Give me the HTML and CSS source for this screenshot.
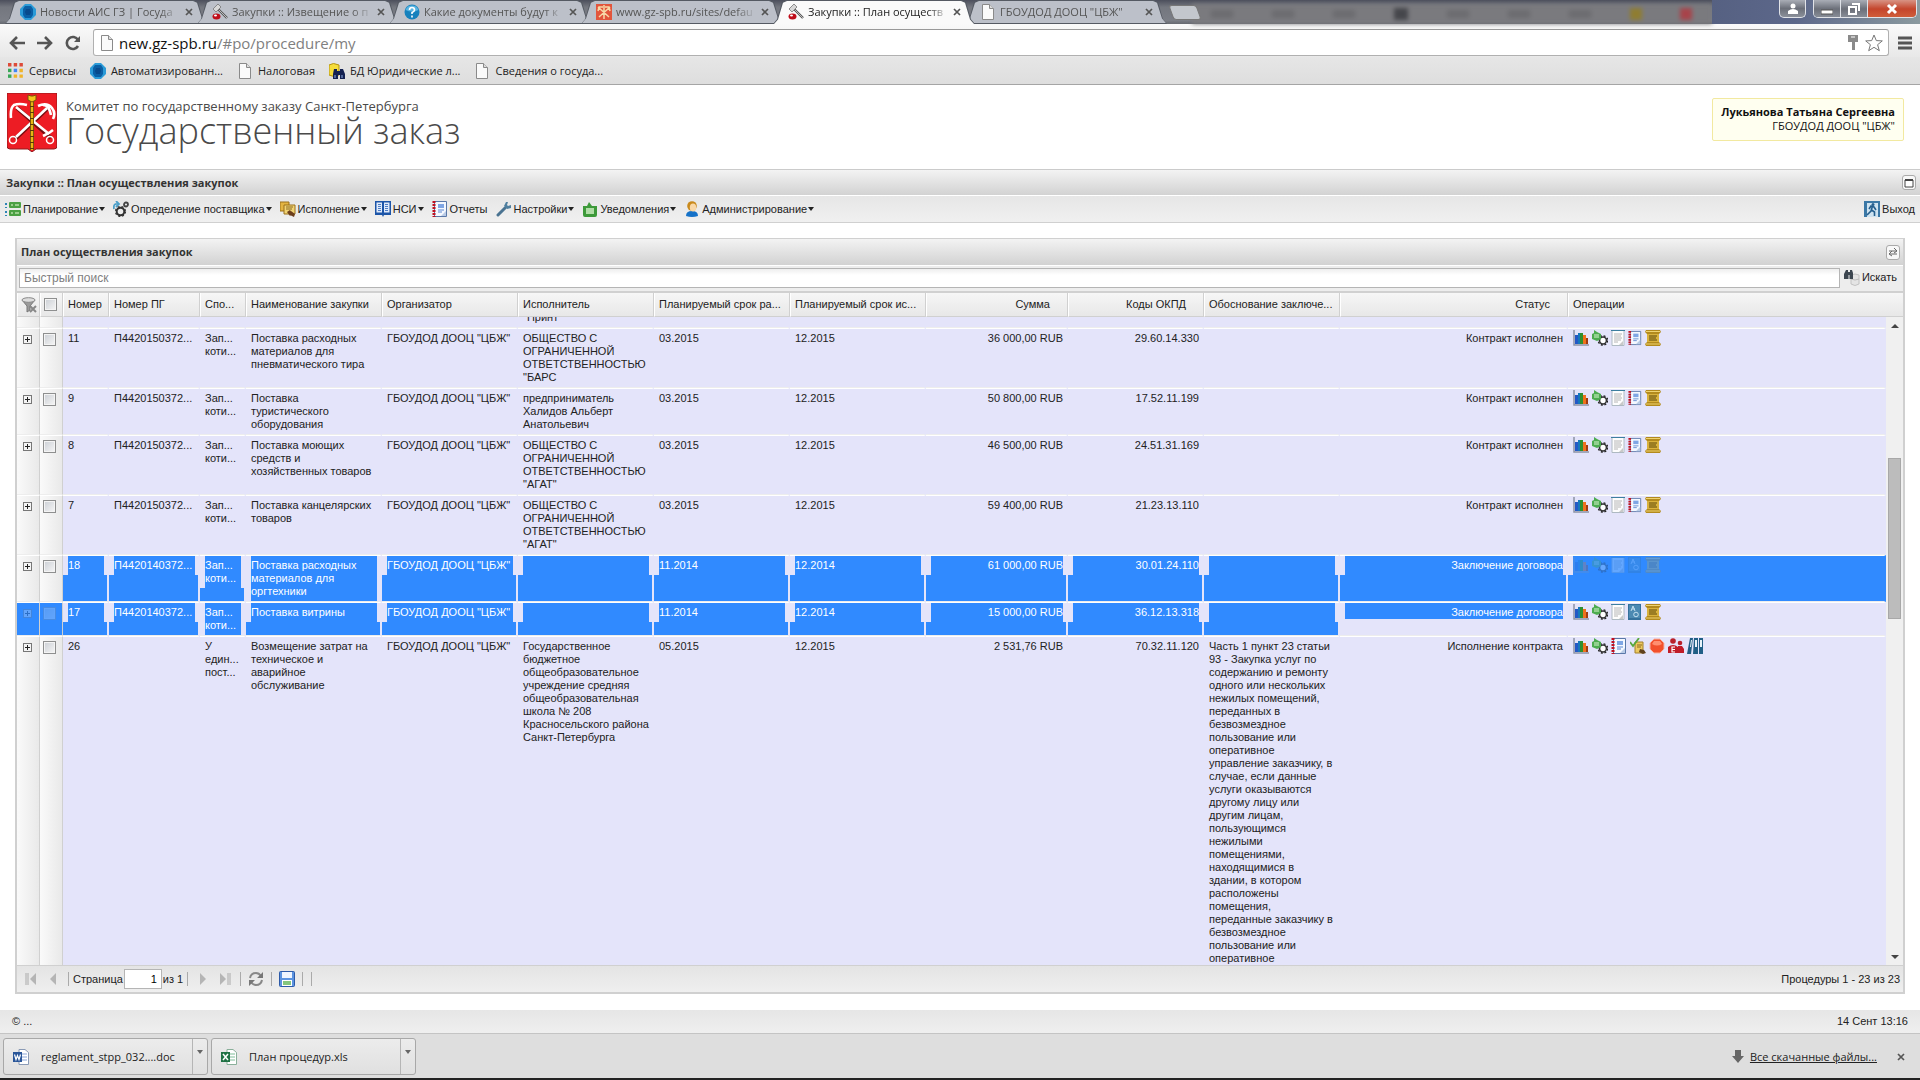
FILE: index.html
```html
<!DOCTYPE html>
<html lang="ru">
<head>
    <meta charset="UTF-8">
    <meta name="viewport" content="width=device-width, initial-scale=1.0">
    <title>Закупки :: План осуществления закупок</title>
    <link rel="stylesheet" href="styles.css">
</head>
<body>
    <!-- icon set -->
    <svg class="sprite" aria-hidden="true">
        <symbol id="i-blue" viewBox="0 0 16 16"><path d="M5 0h6l5 5v6l-5 5H5l-5-5V5z" fill="#2b9bd8"/><path d="M5 2h6l2 3v6l-2 3H5l-2-3V5z" fill="#0a5fa5"/><path d="M6 5h4l1 3-1 3H6L5 8z" fill="#084a8c"/></symbol>
        <symbol id="i-hammer" viewBox="0 0 16 16"><path d="M6 5l9 9" stroke="#555" stroke-width="2.4"/><path d="M6 5l9 9" stroke="#bbb" stroke-width="1"/><path d="M1 5l5-5 3 3-5 5z" fill="#d8d8d8" stroke="#777" stroke-width=".8"/><ellipse cx="4.500" cy="12.500" rx="4" ry="3" fill="#c00d1a"/><ellipse cx="3.500" cy="11.500" rx="1.500" ry="1" fill="#fff"/></symbol>
        <symbol id="i-question" viewBox="0 0 16 16"><circle cx="8" cy="8" r="7.500" fill="#1681bd"/><path d="M1.500 6a7 7 0 0 1 13 0q-6 3-13 0z" fill="#59b5e2"/><path d="M5.500 6q0-2.500 2.500-2.500T10.500 6Q10.500 7.500 8 8.500V10M8 11.500v2" fill="none" stroke="#fff" stroke-width="1.600"/></symbol>
        <symbol id="i-crest" viewBox="0 0 16 16"><rect width="16" height="16" fill="#e2553c"/><path d="M2 3l11 10M14 3L3 13M8 1v14M2 7l1-4 4 0M14 7l-1-4-4 0" stroke="#f7d9a8" stroke-width="1.500" fill="none"/></symbol>
        <symbol id="i-page" viewBox="0 0 16 16"><path d="M2.500.5h7l4 4v11h-11z" fill="#fafafa" stroke="#8a8a8a"/><path d="M9.500.5v4h4" fill="#ddd" stroke="#8a8a8a"/></symbol>
        <symbol id="i-db" viewBox="0 0 16 16"><path d="M0 2q4-3 10 0v10q-5 3-10 0z" fill="#f6dd3a" stroke="#b49313"/><path d="M5 6h3v2h3V6h3l2 5v5h-5v-4h-2v4H4v-5z" fill="#142152"/><path d="M6 12v3M13 12v3" stroke="#8fb2e8"/></symbol>
        <symbol id="i-plan" viewBox="0 0 16 16"><path d="M0 2h2v2H0zM0 6h2v1H0zM0 10h2v2H0zM0 14h2v1H0z" fill="#2c84b5"/><rect x="4" y="1" width="12" height="6" rx="1" fill="#4ba043"/><rect x="4" y="9" width="12" height="6" rx="1" fill="#4ba043"/><path d="M6 4h2m2 0h4M6 12h2m2 0h4" stroke="#b5dba6" stroke-width="1.600"/></symbol>
        <symbol id="i-gears" viewBox="0 0 16 16"><path d="M1 8Q0 2 5 3M3 0l3 3-3 3" fill="none" stroke="#4b9fc9" stroke-width="1.800"/><circle cx="7.500" cy="10.500" r="3.800" fill="none" stroke="#333" stroke-width="2" /><circle cx="7.500" cy="10.500" r="5" fill="none" stroke="#333" stroke-width="1.200" stroke-dasharray="2 2"/><circle cx="13" cy="3.500" r="2" fill="none" stroke="#444" stroke-width="1.800"/></symbol>
        <symbol id="i-exec" viewBox="0 0 16 16"><path d="M0 1h9v9H0z" fill="#e3b441" stroke="#9b701b"/><path d="M4 4h11v9H4z" fill="#f1d475" stroke="#9b701b"/><path d="M6 6h7M6 8h6" stroke="#8b6a22"/><path d="M7 11l3-2 2 3-2 3zM11 10l4 3-1 3-4-2z" fill="#6d3f1c"/></symbol>
        <symbol id="i-book" viewBox="0 0 16 16"><path d="M0 0h16v14H9l-1 2-1-2H0z" fill="#1c55a8"/><path d="M1.500 1.500h5.500v10H1.500zM9 1.500h5.500v10H9z" fill="#dfeafa"/><path d="M3 3.500h3M3 5.500h3M3 7.500h3M3 9.500h3M10 3.500h3M10 5.500h3M10 7.500h3M10 9.500h3" stroke="#4d7dc6"/></symbol>
        <symbol id="i-note" viewBox="0 0 16 16"><path d="M2.500.5h12v15h-12z" fill="#f4f8ff" stroke="#5a78a8"/><path d="M2 0v16" stroke="#c01020" stroke-width="3" stroke-dasharray="2 1"/><path d="M6 3h6v4H6z" fill="#7fa6e4"/><path d="M6 9h6M6 11h4" stroke="#5a86d0"/><path d="M9 15l5-5v5z" fill="#b9cbe6"/></symbol>
        <symbol id="i-wrench" viewBox="0 0 16 16"><path d="M2 14l7-7" stroke="#4a7391" stroke-width="3" stroke-linecap="round"/><path d="M10 1L8 5l3 3 4-1V4l-3 1-1-1 1-3z" fill="#4f7f9f"/></symbol>
        <symbol id="i-folder" viewBox="0 0 16 16"><path d="M1 5h4l2-4 3 4h5v9q0 2-2 2H3q-2 0-2-2z" fill="#3d9a3a"/><path d="M4 8h8M4 10h8M4 12h8" stroke="#d7f3cb" stroke-width="1.300"/></symbol>
        <symbol id="i-admin" viewBox="0 0 16 16"><path d="M2 15q0-5 6-5t6 5q-6 2-12 0z" fill="#1672c8"/><circle cx="8" cy="5" r="4.800" fill="#c98a1d"/><ellipse cx="9" cy="6.500" rx="3.200" ry="4" fill="#f9d8a8"/></symbol>
        <symbol id="i-exit" viewBox="0 0 16 16"><rect width="16" height="16" fill="#3b78a6"/><path d="M3 2h11v14H3z" fill="#cfe3f0"/><circle cx="9" cy="3.500" r="1.500" fill="#255f8e"/><path d="M8.500 5L7 10l-4 4M7.500 9l3 2v4M5 8l2-3 3 1 2 3" fill="none" stroke="#255f8e" stroke-width="1.600"/></symbol>
        <symbol id="i-find" viewBox="0 0 16 16"><path d="M7 5q4-2 8 0v9q-4 3-8 0z" fill="#e4e4e4" stroke="#c2c2c2"/><path d="M7 9q4 2 8 0" fill="none" stroke="#bbb"/><path d="M1 2l1-2h2v2h2V0h2l1 3v6H5.500V5h-1v4H0V4z" fill="#3c4650"/></symbol>
        <symbol id="i-chart" viewBox="0 0 16 16"><path d="M1 0v15h15" fill="none" stroke="#8c93a5" stroke-width="1.500"/><path d="M2 5h3v9H2z" fill="#2458c5"/><path d="M5 3h2v11H5z" fill="#1679b9"/><path d="M7 3h3v11H7z" fill="#2f8f2f"/><path d="M10 5h3v9h-3z" fill="#f0711c"/><path d="M13 8h2v6h-2z" fill="#9f3c12"/></symbol>
        <symbol id="i-process" viewBox="0 0 16 16"><circle cx="11" cy="10.500" r="3.400" fill="#fff" stroke="#333" stroke-width="1.500"/><circle cx="11" cy="10.500" r="4.700" fill="none" stroke="#222" stroke-width="1.300" stroke-dasharray="2 1.700"/><path d="M2 0l3 2 4 2v5l-4 2-5-2V4l2-1z" fill="#4cac50"/><path d="M2 5h5M2 7h5" stroke="#d8f5cf"/></symbol>
        <symbol id="i-doc" viewBox="0 0 14 16"><path d="M1 .5h12v15H1z" fill="#fdfdfd" stroke="#aebac2"/><path d="M0 .5h14" stroke="#3d7f9f"/><path d="M3 4h8M3 6h7M3 8h8M3 10h7M3 12h4" stroke="#b6b6b6"/><path d="M8 15l4-4v4z" fill="#c9c9c9"/></symbol>
        <symbol id="i-cert" viewBox="0 0 14 16"><path d="M0 0h13v16H0z" fill="#34719c"/><path d="M1 1h11v13H1z" fill="#4c8ab2"/><path d="M3 7l2-5 2 5M4 5h3" fill="none" stroke="#c6e0ef"/><circle cx="8" cy="10.500" r="2.300" fill="none" stroke="#c6e0ef"/></symbol>
        <symbol id="i-scroll" viewBox="0 0 16 16"><path d="M2 2h12v12H2z" fill="#d9b23d"/><path d="M1 0h14l1 2-2 2H2L0 2zM2 12h12l2 2-1 2H1l-1-2z" fill="#b38a1d"/><path d="M1 1.500h14M1 14h14" stroke="#efd370"/><path d="M4 6h8M4 8h7M4 10h8" stroke="#5f480b"/></symbol>
        <symbol id="i-check" viewBox="0 0 16 16"><path d="M5 4h8v11H5z" fill="#ecc95f" stroke="#a4802d"/><path d="M7 7h5M7 9h4" stroke="#8b6a22"/><path d="M0 4l3 4L9 0" fill="none" stroke="#58a83e" stroke-width="1.800"/><path d="M10 11l4 1 2 3-3 1-4-2z" fill="#60411c"/></symbol>
        <symbol id="i-stop" viewBox="0 0 16 16"><path d="M5 1h6l4 4v6l-4 4H5l-4-4V5z" fill="#f2502c" stroke="#f7b3a4"/><path d="M5 3h6l2 3q-5 3-10 0z" fill="#ff8f70"/></symbol>
        <symbol id="i-people" viewBox="0 0 16 16"><circle cx="5" cy="3" r="2.800" fill="#b9202a"/><circle cx="12" cy="5" r="2.300" fill="#b9202a"/><path d="M0 15V9q5-4 10 0v6zM10 15V8h4l2 3v4z" fill="#c01c28"/><path d="M7 9H4v5h3M4 11.500h3" fill="none" stroke="#fff" stroke-width="1.200"/></symbol>
        <symbol id="i-binders" viewBox="0 0 16 16"><path d="M3 0h3L4 16H0zM7 0h4v16H6zM12 0h4v16h-4z" fill="#215f86"/><path d="M4 2h1L4 9H3zM8 2h2v7H8zM13 2h2v7h-2z" fill="#e8f3f9"/></symbol>
        <symbol id="i-plus" viewBox="0 0 9 9"><rect x=".5" y=".5" width="8" height="8" fill="#f4f4f4" stroke="#777"/><path d="M2 4.500h5M4.500 2v5" stroke="#222"/></symbol>
        <symbol id="i-close" viewBox="0 0 8 8"><path d="M1 1l6 6M7 1L1 7" stroke="#555" stroke-width="1.700"/></symbol>
    </svg>

    <div class="tabstrip">
        <div class="ghost"><i></i><i></i><i></i><i class="dark"></i><i></i><i></i><i></i><i class="gold"></i><i class="red"></i></div>
        <div class="tabs">
            <div class="tab"><svg><use href="#i-blue"/></svg><span>Новости АИС ГЗ | Госуда</span><button aria-label="Закрыть"><svg><use href="#i-close"/></svg></button></div>
            <div class="tab"><svg><use href="#i-hammer"/></svg><span>Закупки :: Извещение о п</span><button aria-label="Закрыть"><svg><use href="#i-close"/></svg></button></div>
            <div class="tab"><svg><use href="#i-question"/></svg><span>Какие документы будут к</span><button aria-label="Закрыть"><svg><use href="#i-close"/></svg></button></div>
            <div class="tab"><svg><use href="#i-crest"/></svg><span>www.gz-spb.ru/sites/defau</span><button aria-label="Закрыть"><svg><use href="#i-close"/></svg></button></div>
            <div class="tab active"><svg><use href="#i-hammer"/></svg><span>Закупки :: План осуществ</span><button aria-label="Закрыть"><svg><use href="#i-close"/></svg></button></div>
            <div class="tab"><svg><use href="#i-page"/></svg><span>ГБОУДОД ДООЦ "ЦБЖ"</span><button aria-label="Закрыть"><svg><use href="#i-close"/></svg></button></div>
            <button class="new-tab" aria-label="Новая вкладка"></button>
        </div>
        <div class="window-buttons">
            <button class="profile" aria-label="Профиль"><svg viewBox="0 0 12 12"><circle cx="6" cy="3" r="2.500" fill="#fff"/><path d="M1 11V8q5-4 10 0v3z" fill="#fff"/></svg></button>
            <div class="group">
                <button aria-label="Свернуть"><svg viewBox="0 0 12 12"><path d="M0 7h12v4H0z" fill="#fff" stroke="#555"/></svg></button>
                <button aria-label="Восстановить"><svg viewBox="0 0 12 12"><path d="M4 1h7v7M1 4h7v7H1z" fill="none" stroke="#fff" stroke-width="2"/></svg></button>
                <button class="close" aria-label="Закрыть окно"><svg viewBox="0 0 12 12"><path d="M2 2l8 8M10 2l-8 8" stroke="#fff" stroke-width="3"/></svg></button>
            </div>
        </div>
    </div>

    <div class="navbar">
        <button aria-label="Назад"><svg viewBox="0 0 16 16"><path d="M16 8H3M8 2L2 8l6 6" fill="none" stroke="#555" stroke-width="2.600"/></svg></button>
        <button aria-label="Вперёд"><svg viewBox="0 0 16 16"><path d="M0 8h13M8 2l6 6-6 6" fill="none" stroke="#555" stroke-width="2.600"/></svg></button>
        <button aria-label="Обновить"><svg viewBox="0 0 16 16"><path d="M13 11a6 6 0 1 1 0-6" fill="none" stroke="#555" stroke-width="2.600"/><path d="M15 1v6H9z" fill="#555"/></svg></button>
        <div class="omnibox">
            <svg><use href="#i-page"/></svg>
            <div class="url">new.gz-spb.ru<span>/#po/procedure/my</span></div>
            <svg class="key" viewBox="0 0 16 16"><path d="M3 0h10v7h-3v8H7V7H3z" fill="#8a8a8a"/><path d="M6 2h4" stroke="#fff"/></svg>
            <svg class="star" viewBox="0 0 18 18"><path d="M9 1l2.300 5.600 6 .3-4.700 3.800 1.700 6L9 13.300 3.700 16.700l1.700-6L.7 6.900l6-.3z" fill="#fff" stroke="#777"/></svg>
        </div>
        <button class="menu" aria-label="Меню"><svg viewBox="0 0 14 14"><path d="M0 2h14M0 7h14M0 12h14" stroke="#555" stroke-width="3"/></svg></button>
    </div>

    <nav class="bookmarks">
        <a href="#"><svg viewBox="0 0 14 14"><path d="M0 0h3v3H0zM5 0h3v3H5zM10 0h3v3h-3z" fill="#dd4b39"/><path d="M0 5h3v3H0z" fill="#3aa757"/><path d="M5 5h3v3H5z" fill="#4285f4"/><path d="M10 5h3v3h-3zM5 10h3v3H5zM10 10h3v3h-3z" fill="#f0b429"/><path d="M0 10h3v3H0z" fill="#3aa757"/></svg>Сервисы</a>
        <a href="#"><svg><use href="#i-blue"/></svg>Автоматизированн...</a>
        <a href="#"><svg><use href="#i-page"/></svg>Налоговая</a>
        <a href="#"><svg><use href="#i-db"/></svg>БД Юридические л...</a>
        <a href="#"><svg><use href="#i-page"/></svg>Сведения о госуда...</a>
    </nav>

    <header class="site-header">
        <div class="brand">
            <svg class="coat" viewBox="0 0 50 59">
                <path d="M0 0h50v53q0 3-3 3H29l-4 3-4-3H3q-3 0-3-3z" fill="#ed1c24" stroke="#8f1a1c"/>
                <g fill="none" stroke="#7a0d10" stroke-width="4"><path d="M10 15l34 30M41 15L8 46"/></g>
                <g fill="none" stroke="#fff" stroke-width="2.600"><path d="M9 14l33 27M40 15L9 44"/><path d="M4 25q-1-10 3-13 5-2 13 0M46 26q3-6-1-11-5-6-14-2M36 12q6 0 8 10"/><circle cx="6" cy="47" r="3.500" stroke-width="1.500"/><circle cx="43" cy="47" r="3.500" stroke-width="1.500"/><path d="M36 43l6-3 4-3"/></g>
                <path d="M25 8v49" stroke="#5b3a08" stroke-width="4"/><path d="M25 8v49" stroke="#e8b713" stroke-width="2.500" stroke-dasharray="5 1"/>
                <path d="M21 2l3 1h2l3-1v5l-4 2-4-2z" fill="#f4c61b" stroke="#7b520c"/>
            </svg>
            <div>
                <div class="committee">Комитет по государственному заказу Санкт-Петербурга</div>
                <div class="product">Государственный заказ</div>
            </div>
        </div>
        <div class="user">
            <b>Лукьянова Татьяна Сергеевна</b>
            <div>ГБОУДОД ДООЦ "ЦБЖ"</div>
        </div>
    </header>

    <div class="titlebar">
        <h1>Закупки :: План осуществления закупок</h1>
        <button class="tool" aria-label="Развернуть"><svg viewBox="0 0 12 12"><path d="M2 3h8v7H2z" fill="#fff" stroke="#444"/><path d="M2 3h8" stroke="#444" stroke-width="2"/></svg></button>
    </div>

    <nav class="toolbar">
        <button><svg><use href="#i-plan"/></svg>Планирование<i class="arrow"></i></button>
        <button><svg><use href="#i-gears"/></svg>Определение поставщика<i class="arrow"></i></button>
        <button><svg><use href="#i-exec"/></svg>Исполнение<i class="arrow"></i></button>
        <button><svg><use href="#i-book"/></svg>НСИ<i class="arrow"></i></button>
        <button><svg><use href="#i-note"/></svg>Отчеты</button>
        <button><svg><use href="#i-wrench"/></svg>Настройки<i class="arrow"></i></button>
        <button><svg><use href="#i-folder"/></svg>Уведомления<i class="arrow"></i></button>
        <button><svg><use href="#i-admin"/></svg>Администрирование<i class="arrow"></i></button>
        <button class="exit"><svg><use href="#i-exit"/></svg>Выход</button>
    </nav>

    <main class="panel">
        <div class="panel-header">
            <h2>План осуществления закупок</h2>
            <button class="tool" aria-label="Обновить таблицу"><svg viewBox="0 0 12 12"><path d="M2 5h7M7 2l3 3-3 2M10 8H3M5 5L2 8l3 2" fill="none" stroke="#666"/></svg></button>
        </div>
        <div class="search">
            <input type="text" placeholder="Быстрый поиск" aria-label="Быстрый поиск">
            <button><svg><use href="#i-find"/></svg>Искать</button>
        </div>

        <table class="grid grid-head">
            <colgroup><col class="w-side"><col class="w-side"><col class="w-num"><col class="w-pg"><col class="w-num"><col class="w-m"><col class="w-m"><col class="w-m"><col class="w-m"><col class="w-m"><col class="w-sum"><col class="w-m"><col class="w-m"><col class="w-status"><col></colgroup>
            <thead>
                <tr>
                    <th class="mid"><svg viewBox="0 0 16 16"><path d="M1 3l5 6v6l3-2V9l5-6z" fill="#9a9a9a" stroke="#777"/><ellipse cx="7.500" cy="3" rx="6.500" ry="2.300" fill="#ddd" stroke="#888"/><path d="M9 9l6 6M15 9l-6 6" stroke="#888" stroke-width="2"/></svg></th>
                    <th class="mid"><input type="checkbox" aria-label="Выбрать все"></th>
                    <th>Номер</th>
                    <th>Номер ПГ</th>
                    <th>Спо...</th>
                    <th>Наименование закупки</th>
                    <th>Организатор</th>
                    <th>Исполнитель</th>
                    <th>Планируемый срок ра...</th>
                    <th>Планируемый срок ис...</th>
                    <th class="r">Сумма</th>
                    <th class="r">Коды ОКПД</th>
                    <th>Обоснование заключе...</th>
                    <th class="r">Статус</th>
                    <th>Операции</th>
                </tr>
            </thead>
        </table>

        <div class="grid-body">
            <div class="rows">
                <table class="grid">
                    <colgroup><col class="w-side"><col class="w-side"><col class="w-num"><col class="w-pg"><col class="w-num"><col class="w-m"><col class="w-m"><col class="w-m"><col class="w-m"><col class="w-m"><col class="w-sum"><col class="w-m"><col class="w-m"><col class="w-status"><col></colgroup>
                    <tbody>
                        <tr>
                            <td class="side"></td><td class="side"></td><td></td><td></td><td></td><td></td><td></td>
                            <td><div>"Принт</div></td>
                            <td></td><td></td><td></td><td></td><td></td><td></td><td></td>
                        </tr>
                        <tr>
                            <td class="side"><svg><use href="#i-plus"/></svg></td>
                            <td class="side"><input type="checkbox" aria-label="Выбрать 11"></td>
                            <td><div>11</div></td>
                            <td><div>П4420150372...</div></td>
                            <td><div>Зап...<br>коти...</div></td>
                            <td><div>Поставка расходных материалов для пневматического тира</div></td>
                            <td><div>ГБОУДОД ДООЦ "ЦБЖ"</div></td>
                            <td><div>ОБЩЕСТВО С ОГРАНИЧЕННОЙ ОТВЕТСТВЕННОСТЬЮ "БАРС</div></td>
                            <td><div>03.2015</div></td>
                            <td><div>12.2015</div></td>
                            <td class="r"><div>36 000,00 RUB</div></td>
                            <td class="r"><div>29.60.14.330</div></td>
                            <td></td>
                            <td class="r"><div>Контракт исполнен</div></td>
                            <td><div class="ops"><svg><use href="#i-chart"/></svg><svg><use href="#i-process"/></svg><svg class="thin"><use href="#i-doc"/></svg><svg class="thin"><use href="#i-note"/></svg><svg><use href="#i-scroll"/></svg></div></td>
                        </tr>
                        <tr>
                            <td class="side"><svg><use href="#i-plus"/></svg></td>
                            <td class="side"><input type="checkbox" aria-label="Выбрать 9"></td>
                            <td><div>9</div></td>
                            <td><div>П4420150372...</div></td>
                            <td><div>Зап...<br>коти...</div></td>
                            <td><div>Поставка<br>туристического оборудования</div></td>
                            <td><div>ГБОУДОД ДООЦ "ЦБЖ"</div></td>
                            <td><div>предприниматель Халидов Альберт Анатольевич</div></td>
                            <td><div>03.2015</div></td>
                            <td><div>12.2015</div></td>
                            <td class="r"><div>50 800,00 RUB</div></td>
                            <td class="r"><div>17.52.11.199</div></td>
                            <td></td>
                            <td class="r"><div>Контракт исполнен</div></td>
                            <td><div class="ops"><svg><use href="#i-chart"/></svg><svg><use href="#i-process"/></svg><svg class="thin"><use href="#i-doc"/></svg><svg class="thin"><use href="#i-note"/></svg><svg><use href="#i-scroll"/></svg></div></td>
                        </tr>
                        <tr>
                            <td class="side"><svg><use href="#i-plus"/></svg></td>
                            <td class="side"><input type="checkbox" aria-label="Выбрать 8"></td>
                            <td><div>8</div></td>
                            <td><div>П4420150372...</div></td>
                            <td><div>Зап...<br>коти...</div></td>
                            <td><div>Поставка моющих средств и хозяйственных товаров</div></td>
                            <td><div>ГБОУДОД ДООЦ "ЦБЖ"</div></td>
                            <td><div>ОБЩЕСТВО С ОГРАНИЧЕННОЙ ОТВЕТСТВЕННОСТЬЮ "АГАТ"</div></td>
                            <td><div>03.2015</div></td>
                            <td><div>12.2015</div></td>
                            <td class="r"><div>46 500,00 RUB</div></td>
                            <td class="r"><div>24.51.31.169</div></td>
                            <td></td>
                            <td class="r"><div>Контракт исполнен</div></td>
                            <td><div class="ops"><svg><use href="#i-chart"/></svg><svg><use href="#i-process"/></svg><svg class="thin"><use href="#i-doc"/></svg><svg class="thin"><use href="#i-note"/></svg><svg><use href="#i-scroll"/></svg></div></td>
                        </tr>
                        <tr>
                            <td class="side"><svg><use href="#i-plus"/></svg></td>
                            <td class="side"><input type="checkbox" aria-label="Выбрать 7"></td>
                            <td><div>7</div></td>
                            <td><div>П4420150372...</div></td>
                            <td><div>Зап...<br>коти...</div></td>
                            <td><div>Поставка канцелярских товаров</div></td>
                            <td><div>ГБОУДОД ДООЦ "ЦБЖ"</div></td>
                            <td><div>ОБЩЕСТВО С ОГРАНИЧЕННОЙ ОТВЕТСТВЕННОСТЬЮ "АГАТ"</div></td>
                            <td><div>03.2015</div></td>
                            <td><div>12.2015</div></td>
                            <td class="r"><div>59 400,00 RUB</div></td>
                            <td class="r"><div>21.23.13.110</div></td>
                            <td></td>
                            <td class="r"><div>Контракт исполнен</div></td>
                            <td><div class="ops"><svg><use href="#i-chart"/></svg><svg><use href="#i-process"/></svg><svg class="thin"><use href="#i-doc"/></svg><svg class="thin"><use href="#i-note"/></svg><svg><use href="#i-scroll"/></svg></div></td>
                        </tr>
                        <tr class="marked">
                            <td class="side"><svg><use href="#i-plus"/></svg></td>
                            <td class="side"><input type="checkbox" aria-label="Выбрать 18"></td>
                            <td><div>18</div></td>
                            <td><div>П4420140372...</div></td>
                            <td><div>Зап...<br>коти...</div></td>
                            <td><div>Поставка расходных материалов для оргтехники</div></td>
                            <td><div>ГБОУДОД ДООЦ "ЦБЖ"</div></td>
                            <td><div>&nbsp;</div></td>
                            <td><div>11.2014</div></td>
                            <td><div>12.2014</div></td>
                            <td class="r"><div>61 000,00 RUB</div></td>
                            <td class="r"><div>30.01.24.110</div></td>
                            <td><div>&nbsp;</div></td>
                            <td class="r"><div>Заключение договора</div></td>
                            <td class="last"><div class="ops"><svg><use href="#i-chart"/></svg><svg><use href="#i-process"/></svg><svg class="thin"><use href="#i-doc"/></svg><svg class="thin"><use href="#i-cert"/></svg><svg><use href="#i-scroll"/></svg></div></td>
                        </tr>
                        <tr class="marked">
                            <td class="side on"><svg><use href="#i-plus"/></svg></td>
                            <td class="side on"><input type="checkbox" aria-label="Выбрать 17"></td>
                            <td><div>17</div></td>
                            <td><div>П4420140372...</div></td>
                            <td><div>Зап...<br>коти...</div></td>
                            <td><div>Поставка витрины</div></td>
                            <td><div>ГБОУДОД ДООЦ "ЦБЖ"</div></td>
                            <td><div>&nbsp;</div></td>
                            <td><div>11.2014</div></td>
                            <td><div>12.2014</div></td>
                            <td class="r"><div>15 000,00 RUB</div></td>
                            <td class="r"><div>36.12.13.318</div></td>
                            <td><div>&nbsp;</div></td>
                            <td class="r tail"><div>Заключение договора</div></td>
                            <td class="plain"><div class="ops"><svg><use href="#i-chart"/></svg><svg><use href="#i-process"/></svg><svg class="thin"><use href="#i-doc"/></svg><svg class="thin"><use href="#i-cert"/></svg><svg><use href="#i-scroll"/></svg></div></td>
                        </tr>
                        <tr>
                            <td class="side"><svg><use href="#i-plus"/></svg></td>
                            <td class="side"><input type="checkbox" aria-label="Выбрать 26"></td>
                            <td><div>26</div></td>
                            <td></td>
                            <td><div>У<br>един...<br>пост...</div></td>
                            <td><div>Возмещение затрат на техническое и<br>аварийное<br>обслуживание</div></td>
                            <td><div>ГБОУДОД ДООЦ "ЦБЖ"</div></td>
                            <td><div>Государственное бюджетное общеобразовательное учреждение средняя общеобразовательная школа № 208<br>Красносельского района Санкт-Петербурга</div></td>
                            <td><div>05.2015</div></td>
                            <td><div>12.2015</div></td>
                            <td class="r"><div>2 531,76 RUB</div></td>
                            <td class="r"><div>70.32.11.120</div></td>
                            <td><div>Часть 1 пункт 23 статьи 93 - Закупка услуг по содержанию и ремонту одного или нескольких нежилых помещений, переданных в безвозмездное пользование или оперативное управление заказчику, в случае, если данные услуги оказываются другому лицу или другим лицам, пользующимся нежилыми помещениями, находящимися в здании, в котором расположены помещения, переданные заказчику в безвозмездное пользование или оперативное</div></td>
                            <td class="r"><div>Исполнение контракта</div></td>
                            <td><div class="ops"><svg><use href="#i-chart"/></svg><svg><use href="#i-process"/></svg><svg><use href="#i-note"/></svg><svg><use href="#i-check"/></svg><svg><use href="#i-stop"/></svg><svg><use href="#i-people"/></svg><svg><use href="#i-binders"/></svg></div></td>
                        </tr>
                    </tbody>
                </table>
            </div>
            <div class="scrollbar">
                <i class="up"></i>
                <div class="track"><div class="thumb"></div></div>
                <i class="down"></i>
            </div>
        </div>

        <div class="paging">
            <button aria-label="Первая"><svg viewBox="0 0 16 16"><path d="M3 2v12M5 2v12" stroke="#aaa"/><path d="M13 2v12L7 8z" fill="#b5b5b5"/></svg></button>
            <button aria-label="Предыдущая"><svg viewBox="0 0 16 16"><path d="M11 2v12L5 8z" fill="#b5b5b5"/></svg></button>
            <i class="sep"></i>
            <label for="page">Страница</label>
            <input type="text" id="page" value="1">
            <span>из 1</span>
            <i class="sep"></i>
            <button aria-label="Следующая"><svg viewBox="0 0 16 16"><path d="M5 2v12l6-6z" fill="#b5b5b5"/></svg></button>
            <button aria-label="Последняя"><svg viewBox="0 0 16 16"><path d="M11 2v12M13 2v12" stroke="#aaa"/><path d="M3 2v12l6-6z" fill="#b5b5b5"/></svg></button>
            <i class="sep"></i>
            <button aria-label="Обновить"><svg viewBox="0 0 16 16"><path d="M2 7q1-5 6-5 3 0 5 3M14 9q-1 5-6 5-3 0-5-3" fill="none" stroke="#888" stroke-width="2"/><path d="M15 1v6H9zM1 15V9h6z" fill="#777"/></svg></button>
            <i class="sep"></i>
            <button aria-label="Сохранить"><svg viewBox="0 0 16 16"><rect x=".5" y=".5" width="15" height="15" rx="1" fill="#5b93e0" stroke="#2c5aa8"/><path d="M3 1h10v6H3z" fill="#eef5ff"/><path d="M3 9h10v6H3z" fill="#fff"/><path d="M4 11h8M4 13h8" stroke="#5cb454" stroke-width="1.300"/></svg></button>
            <i class="sep"></i>
            <i class="sep"></i>
            <span class="total">Процедуры 1 - 23 из 23</span>
        </div>
    </main>

    <footer class="status">
        <span>© ...</span>
        <span>14 Сент 13:16</span>
    </footer>

    <div class="downloads">
        <div class="file">
            <button class="name"><svg viewBox="0 0 16 16"><path d="M6 .5h6l3.500 3v12H6z" fill="#fff" stroke="#8a9ab5"/><path d="M9 5h5M9 8h5M9 11h5" stroke="#8aa5d8"/><path d="M0 3h9v10H0z" fill="#2a5699"/><path d="M1.500 5.500l1.500 5 1.500-4 1.500 4 1.500-5" fill="none" stroke="#fff" stroke-width="1.200"/></svg>reglament_stpp_032....doc</button>
            <button class="more" aria-label="Действия"><i class="arrow"></i></button>
        </div>
        <div class="file">
            <button class="name"><svg viewBox="0 0 16 16"><path d="M6 .5h6l3.500 3v12H6z" fill="#fff" stroke="#8ab09a"/><path d="M9 5h5M9 8h5M9 11h5" stroke="#7fbd98"/><path d="M0 3h9v10H0z" fill="#207245"/><path d="M2 5l5 6M7 5l-5 6" stroke="#fff" stroke-width="1.500"/></svg>План процедур.xls</button>
            <button class="more" aria-label="Действия"><i class="arrow"></i></button>
        </div>
        <div class="all">
            <svg viewBox="0 0 12 14"><path d="M3 0h6v6h3l-6 7-6-7h3z" fill="#666"/></svg>
            <a href="#">Все скачанные файлы...</a>
            <button aria-label="Закрыть панель"><svg><use href="#i-close"/></svg></button>
        </div>
    </div>
</body>
</html>
```
FILE: styles.css
```css
* {
    margin: 0;
    padding: 0;
    box-sizing: border-box;
}
body {
    font-family: "Liberation Sans", Arial, sans-serif;
    font-size: 11px;
    line-height: 13px;
    color: #222;
    background: #fff;
    display: flex;
    flex-direction: column;
    height: 100vh;
    overflow: hidden;
}
button {
    font: inherit;
    color: inherit;
    background: none;
    border: none;
    display: flex;
    align-items: center;
}
svg {
    width: 16px;
    height: 16px;
    flex: none;
    display: block;
}
.sprite {
    position: absolute;
    width: 0;
    height: 0;
}

/* browser tabs */
.tabstrip {
    position: relative;
    display: flex;
    justify-content: space-between;
    height: 24px;
    padding-left: 5px;
    background: linear-gradient(#4c4f5c, #74777f 30%, #7b7e86 85%, #666970);
    font: 11px/24px "Open Sans", sans-serif;
    flex: none;
}
.tabstrip::after {
    content: "";
    position: absolute;
    top: 0;
    right: 0;
    width: 208px;
    height: 24px;
    background: linear-gradient(to right, #566182, #5c678a 40%, #8b9a9f);
}
.ghost {
    position: absolute;
    right: 208px;
    bottom: 0;
    width: 520px;
    height: 20px;
    display: flex;
    align-items: center;
    justify-content: space-around;
    background: #7a7a7e;
    filter: blur(2px);
}
.ghost i {
    width: 22px;
    height: 8px;
    background: #6c6c70;
}
.ghost .dark {
    width: 14px;
    height: 12px;
    background: #45464b;
}
.ghost .gold {
    width: 12px;
    height: 12px;
    background: #8f7d31;
}
.ghost .red {
    width: 12px;
    height: 12px;
    background: #a8434a;
}
.tabs {
    display: flex;
    position: relative;
    z-index: 1;
}
.tab {
    display: flex;
    align-items: center;
    width: 202px;
    margin-right: -10px;
    padding: 0 14px 0 15px;
    color: #555;
    background: #555a63;
    clip-path: polygon(0 100%, 4px 80%, 9px 8%, 13px 0, 189px 0, 193px 8%, 198px 80%, 100% 100%);
    position: relative;
}
.tab::before {
    content: "";
    position: absolute;
    inset: 1px 0 1px 0;
    background: #bcc0c9;
    clip-path: polygon(1px 100%, 5px 80%, 10px 8%, 14px 0, 188px 0, 192px 8%, 197px 80%, 201px 100%);
    z-index: -1;
}
.tab.active {
    z-index: 2;
    color: #222;
}
.tab.active::before {
    background: #fafafa;
    bottom: 0;
}
.tab span {
    flex: 1;
    margin: 0 4px;
    overflow: hidden;
    white-space: nowrap;
    -webkit-mask-image: linear-gradient(to right, #000 85%, transparent);
    mask-image: linear-gradient(to right, #000 85%, transparent);
}
.tab button svg,
.all button svg {
    width: 8px;
    height: 8px;
}
.new-tab {
    width: 28px;
    height: 15px;
    margin: 5px 0 0 14px;
    background: #c3c7cd;
    border: 1px solid #777;
    border-radius: 3px;
    transform: skewX(20deg);
}
.window-buttons {
    display: flex;
    gap: 7px;
    padding-right: 3px;
    position: relative;
    z-index: 1;
}
.window-buttons button {
    justify-content: center;
    width: 27px;
    height: 18px;
    background: linear-gradient(#a9adb6, #6b6f79 50%, #8b909a);
    border-right: 1px solid #dfe2e8;
}
.window-buttons svg {
    width: 12px;
    height: 12px;
}
.window-buttons .profile,
.group {
    height: 18px;
    border: 1px solid #e1e3e8;
    border-top: none;
    border-radius: 0 0 5px 5px;
    overflow: hidden;
}
.group {
    display: flex;
}
.window-buttons .close {
    width: 48px;
    background: linear-gradient(#d89384, #c4452c 50%, #d2603b);
    border: none;
}

/* address row and bookmarks */
.navbar {
    display: flex;
    align-items: center;
    height: 33px;
    padding: 4px 8px 0 9px;
    background: linear-gradient(#fafafa, #e8e8e8);
    flex: none;
}
.navbar button {
    margin-right: 12px;
}
.omnibox {
    flex: 1;
    display: flex;
    align-items: center;
    height: 27px;
    padding: 0 5px;
    background: #fff;
    border: 1px solid #b0b0b0;
    border-top-color: #999;
    border-radius: 3px;
}
.url {
    flex: 1;
    margin-left: 4px;
    font: 15px/20px "Open Sans", sans-serif;
    color: #111;
}
.url span {
    color: #808080;
}
.omnibox .star {
    width: 18px;
    height: 18px;
    margin-left: 4px;
}
.navbar .menu {
    margin: 0 0 0 9px;
}
.menu svg {
    width: 14px;
    height: 14px;
}
.bookmarks {
    display: flex;
    align-items: center;
    gap: 14px;
    height: 28px;
    padding-left: 8px;
    background: linear-gradient(#e6e6e6, #dedede);
    border-bottom: 1px solid #a5a5a5;
    font: 11px/16px "Open Sans", sans-serif;
    flex: none;
}
.bookmarks a {
    display: flex;
    align-items: center;
    gap: 5px;
    color: #222;
    text-decoration: none;
}

/* site header */
.site-header {
    display: flex;
    justify-content: space-between;
    align-items: flex-start;
    height: 84px;
    padding: 8px 16px 0 7px;
    flex: none;
}
.brand {
    display: flex;
    gap: 9px;
    color: #4a4a4a;
}
.coat {
    width: 50px;
    height: 59px;
}
.committee {
    font: 13px/18px "Open Sans", sans-serif;
    padding-top: 4px;
}
.product {
    font: 300 36px/32px "Open Sans", sans-serif;
}
.user {
    width: 192px;
    margin-top: 5px;
    padding: 6px 8px 7px;
    text-align: right;
    font: 11px/14px "Open Sans", sans-serif;
    color: #111;
    background: #fffff0;
    border: 1px solid #f2e9a0;
    border-radius: 2px;
}

/* application bars */
.titlebar,
.panel-header {
    display: flex;
    justify-content: space-between;
    align-items: center;
    height: 27px;
    padding: 0 4px 0 6px;
    border-top: 1px solid #cbcbcb;
    border-bottom: 1px solid #fff;
    background: linear-gradient(#f3f3f3, #e4e4e4 45%, #d2d2d2);
    flex: none;
}
.panel-header {
    padding: 0 3px 0 4px;
    border-top: none;
}
h1,
h2 {
    font: bold 11px/16px "Open Sans", sans-serif;
    color: #333;
}
.tool {
    width: 14px;
    height: 15px;
    justify-content: center;
    background: #f8f8f8;
    border: 1px solid #aaa;
    border-radius: 3px;
}
.tool svg {
    width: 12px;
    height: 12px;
}
.toolbar {
    display: flex;
    align-items: center;
    gap: 8px;
    height: 27px;
    padding: 0 5px;
    background: linear-gradient(#e6e6e6, #f0f0f0);
    border-bottom: 1px solid #d0d0d0;
    flex: none;
}
.toolbar button {
    gap: 2px;
}
.toolbar .arrow {
    margin-left: -1px;
}
.toolbar .exit {
    margin-left: auto;
}
.arrow {
    border: 3px solid transparent;
    border-top: 4px solid #222;
    border-bottom: none;
}

/* procurement grid */
.panel {
    flex: 1;
    min-height: 0;
    display: flex;
    flex-direction: column;
    margin: 15px 15px 16px;
    border: 2px solid #d0d0d0;
    border-top-width: 1px;
}
.search {
    display: flex;
    align-items: center;
    height: 27px;
    padding: 0 6px 2px 2px;
    background: #ededed;
    border-bottom: 2px solid #d0d0d0;
    flex: none;
}
.search input {
    flex: 1;
    height: 20px;
    padding: 0 4px;
    font: 12px/16px "Liberation Sans", sans-serif;
    border: 1px solid #b5b5b5;
    background: linear-gradient(#eee, #fff 6px);
}
.search input::placeholder {
    color: #808080;
}
.search button {
    gap: 2px;
    margin-left: 4px;
}
.grid {
    width: 100%;
    table-layout: fixed;
    border-collapse: separate;
    border-spacing: 0;
}
.w-side {
    width: 23px;
}
.w-num {
    width: 46px;
}
.w-pg {
    width: 91px;
}
.w-m {
    width: 136px;
}
.w-sum {
    width: 142px;
}
.w-status {
    width: 228px;
}
.grid-head {
    flex: none;
    background: linear-gradient(#f6f6f6, #e7e7e7);
}
th {
    height: 24px;
    padding: 0 0 0 4px;
    font-weight: normal;
    text-align: left;
    white-space: nowrap;
    border-left: 1px solid #fff;
    border-right: 1px solid #d0d0d0;
    border-bottom: 1px solid #d0d0d0;
}
th.mid {
    padding: 0 0 0 3px;
}
th.r {
    text-align: right;
    padding-right: 17px;
}
th:last-child {
    border-right: none;
}
.grid-body {
    flex: 1;
    min-height: 0;
    display: flex;
    overflow: hidden;
    background: #e4e4fa;
}
.rows {
    flex: 1;
    margin-top: -10px;
}
td {
    vertical-align: top;
    background: #e4e4fa;
    border-top: 1px solid #fff;
    border-bottom: 1px solid #ededed;
    border-right: 2px solid #e4e4fa;
}
td > div {
    padding: 3px 0;
    min-height: 19px;
    border: solid transparent;
    border-width: 0 3px 0 5px;
}
td.r {
    text-align: right;
}
tr:last-child td {
    border-bottom: none;
}
td.side {
    background: linear-gradient(to right, #fafafa, #e9e9e9);
    border-right: 1px solid #d0d0d0;
}
td.side svg {
    width: 9px;
    height: 9px;
    margin: 6px 0 0 6px;
}
input[type="checkbox"] {
    appearance: none;
    display: block;
    width: 13px;
    height: 13px;
    border: 1px solid #8e8f8f;
    outline: 1px solid #f4f4f4;
    outline-offset: -2px;
    background: linear-gradient(135deg, #cbcfd5, #f6f6f6);
}
td input[type="checkbox"] {
    margin: 4px 0 0 3px;
}
.ops {
    display: flex;
    gap: 3px;
    padding: 1px 0;
}
.ops svg.thin {
    width: 14px;
}

/* rows covered by the text selection */
.marked td:not(.side) {
    background: #308aff;
    color: #fff;
}
.marked td:not(.side) > div {
    border-color: #e4e4fa;
}
.marked td.side.on {
    background: #308aff;
}
.marked .on svg,
.marked .on input,
.marked .last svg {
    opacity: 0.25;
}
.marked td.last {
    border-right-color: #308aff;
}
.marked td.last > div {
    border-right: none;
}
.marked td.tail,
.marked td.plain {
    background: #e4e4fa;
}
.marked td.tail > div {
    min-height: 0;
    padding-bottom: 0;
    background: #308aff;
}

.scrollbar {
    width: 17px;
    display: flex;
    flex-direction: column;
    align-items: center;
    background: #f0f0f0;
}
.scrollbar i {
    margin: 7px 0 6px;
    border: 4px solid transparent;
}
.scrollbar .up {
    border-top: none;
    border-bottom-color: #444;
}
.scrollbar .down {
    border-bottom: none;
    border-top-color: #444;
}
.track {
    flex: 1;
    width: 13px;
    display: grid;
    grid-template-rows: 124fr 161fr 329fr;
}
.thumb {
    grid-row: 2;
    background: #bcbcbc;
    border: 1px solid #a8a8a8;
}
.paging {
    display: flex;
    align-items: center;
    height: 27px;
    padding: 0 3px;
    background: linear-gradient(#e4e4e4, #efefef);
    border-top: 1px solid #d0d0d0;
    flex: none;
}
.paging button {
    margin: 0 3px;
}
.paging .sep {
    width: 1px;
    height: 14px;
    margin: 0 4px;
    background: #aaa;
}
.paging input {
    width: 38px;
    height: 20px;
    margin: 0 1px;
    padding: 0 4px;
    font: inherit;
    text-align: right;
    border: 1px solid #b5b5b5;
}
.total {
    margin-left: auto;
}

/* status line and download shelf */
.status {
    display: flex;
    justify-content: space-between;
    align-items: center;
    height: 23px;
    padding: 0 12px;
    background: linear-gradient(#e6e6e6, #efefef);
    flex: none;
}
.downloads {
    display: flex;
    gap: 3px;
    height: 47px;
    padding: 4px 15px 3px 3px;
    background: #dedede;
    border-top: 1px solid #c4c4c4;
    border-bottom: 2px solid #222;
    font: 11px/16px "Open Sans", sans-serif;
    flex: none;
}
.file {
    display: flex;
    width: 205px;
    background: linear-gradient(#ececec, #e0e0e0);
    border: 1px solid #a8a8a8;
    border-radius: 3px;
}
.file .name {
    flex: 1;
    gap: 12px;
    padding-left: 9px;
    white-space: nowrap;
}
.file .more {
    width: 15px;
    padding: 0 4px 10px 4px;
    border-left: 1px solid #b5b5b5;
}
.file .arrow {
    border-top-color: #666;
}
.all {
    margin-left: auto;
    display: flex;
    align-items: center;
}
.all > svg {
    width: 12px;
    height: 14px;
    margin-right: 6px;
}
.all a {
    color: #222;
}
.all button {
    margin-left: 20px;
}
```
